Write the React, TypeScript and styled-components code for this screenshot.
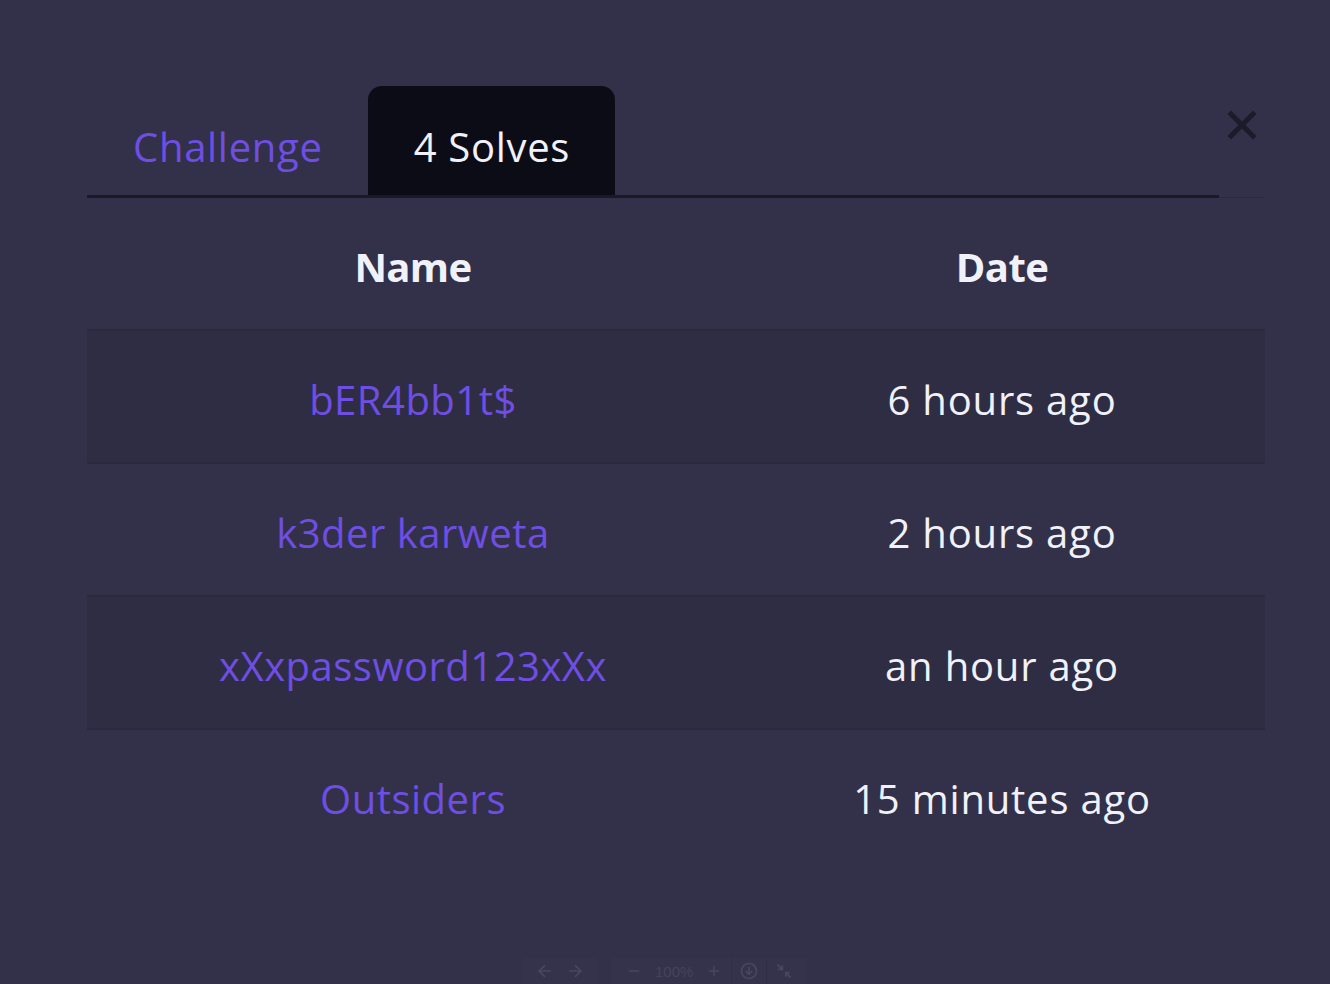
import styled, { createGlobalStyle } from "styled-components";

const GlobalStyle = createGlobalStyle`
  html, body {
    margin: 0;
    padding: 0;
    background: #323149;
  }
  body {
    font-family: "Open Sans", "Noto Sans", sans-serif;
    -webkit-font-smoothing: antialiased;
  }
`;

interface Solve {
  name: string;
  date: string;
}

const solves: Solve[] = [
  { name: "bER4bb1t$", date: "6 hours ago" },
  { name: "k3der karweta", date: "2 hours ago" },
  { name: "xXxpassword123xXx", date: "an hour ago" },
  { name: "Outsiders", date: "15 minutes ago" },
];

function App() {
  return (
    <Page>
      <GlobalStyle />
      <Modal>
        <Header>
          <Tabs>
            <Tab>Challenge</Tab>
            <Tab active>4 Solves</Tab>
          </Tabs>
          <Close aria-label="close">
            <svg width="34" height="34" viewBox="0 0 34 34">
              <path
                d="M6 6 L28 28 M28 6 L6 28"
                stroke="#1c1b29"
                strokeWidth="5"
                strokeLinecap="square"
              />
            </svg>
          </Close>
        </Header>

        <Table>
          <thead>
            <tr>
              <Th>Name</Th>
              <Th>Date</Th>
            </tr>
          </thead>
          <tbody>
            {solves.map((s, i) => (
              <Row key={s.name} striped={i % 2 === 0}>
                <NameCell>{s.name}</NameCell>
                <DateCell>{s.date}</DateCell>
              </Row>
            ))}
          </tbody>
        </Table>
      </Modal>

      {/* faint image viewer toolbar */}
      <Toolbar>
        <ToolGroup>
          <ToolIcon>
            <svg width="20" height="20" viewBox="0 0 24 24" fill="none" stroke="currentColor" strokeWidth="2">
              <path d="M19 12H5M12 19l-7-7 7-7" />
            </svg>
          </ToolIcon>
          <ToolIcon>
            <svg width="20" height="20" viewBox="0 0 24 24" fill="none" stroke="currentColor" strokeWidth="2">
              <path d="M5 12h14M12 5l7 7-7 7" />
            </svg>
          </ToolIcon>
        </ToolGroup>
        <ToolGroup>
          <ToolIcon>
            <svg width="18" height="18" viewBox="0 0 24 24" fill="none" stroke="currentColor" strokeWidth="2">
              <path d="M5 12h14" />
            </svg>
          </ToolIcon>
          <Zoom>100%</Zoom>
          <ToolIcon>
            <svg width="18" height="18" viewBox="0 0 24 24" fill="none" stroke="currentColor" strokeWidth="2">
              <path d="M5 12h14M12 5v14" />
            </svg>
          </ToolIcon>
          <Divider />
          <ToolIcon>
            <svg width="20" height="20" viewBox="0 0 24 24" fill="none" stroke="currentColor" strokeWidth="2">
              <circle cx="12" cy="12" r="9" />
              <path d="M12 7v9M8 12l4 4 4-4" />
            </svg>
          </ToolIcon>
          <Divider />
          <ToolIcon>
            <svg width="20" height="20" viewBox="0 0 24 24" fill="none" stroke="currentColor" strokeWidth="2">
              <path d="M4 4l6 6M10 5v5H5M20 20l-6-6M14 19v-5h5" />
            </svg>
          </ToolIcon>
        </ToolGroup>
      </Toolbar>
    </Page>
  );
}

export default App;

const Page = styled.div`
  position: relative;
  width: 1330px;
  height: 984px;
  overflow: hidden;
  background: #323149;
`;

const Modal = styled.div`
  width: 1178px;
  padding: 86px 0 0 87px;
`;

const Header = styled.div`
  display: flex;
  align-items: flex-start;
  justify-content: space-between;
  position: relative;
  border-bottom: 1px solid #2a293d;
  padding-bottom: 1px;

  &::after {
    content: "";
    position: absolute;
    left: 0;
    bottom: -1px;
    width: 1132px;
    height: 3px;
    background: #1a1a27;
  }
`;

const Tabs = styled.div`
  display: flex;
  align-items: flex-end;
`;

const Tab = styled.div<{ active?: boolean }>`
  height: 110px;
  box-sizing: border-box;
  padding: 12px 45px 0 46px;
  display: flex;
  align-items: center;
  font-size: 40px;
  line-height: 1;
  letter-spacing: 0.7px;
  color: ${(p) => (p.active ? "#f1f1fa" : "#6f4ee4")};
  background: ${(p) => (p.active ? "#0c0c16" : "transparent")};
  border-radius: 14px 14px 0 0;
`;

const Close = styled.div`
  width: 40px;
  height: 40px;
  margin-top: 19px;
  margin-right: 3px;
  display: flex;
  align-items: center;
  justify-content: center;
`;

const Table = styled.table`
  width: 1178px;
  border-collapse: collapse;
  table-layout: fixed;
  margin-top: 1px;
`;

const Th = styled.th`
  height: 131px;
  width: 50%;
  box-sizing: border-box;
  padding: 4px 0 0;
  font-size: 40px;
  font-weight: 700;
  letter-spacing: -0.6px;
  color: #f1f1fa;
  text-align: center;
  &:first-child {
    width: 652px;
  }
`;

const Row = styled.tr<{ striped: boolean }>`
  height: 133px;
  background: ${(p) => (p.striped ? "#2e2d43" : "transparent")};
  border-top: 2px solid #2a293d;
`;

const NameCell = styled.td`
  text-align: center;
  padding-top: 6px;
  font-size: 40px;
  letter-spacing: 0.5px;
  color: #6f4ee4;
`;

const DateCell = styled.td`
  text-align: center;
  padding-top: 6px;
  font-size: 40px;
  letter-spacing: 0.8px;
  color: #f1f1fa;
`;

const Toolbar = styled.div`
  position: absolute;
  left: 522px;
  top: 958px;
  display: flex;
  gap: 13px;
`;

const ToolGroup = styled.div`
  display: flex;
  align-items: center;
  height: 34px;
  padding: 0 8px;
  background: #34334b;
  border-radius: 4px;
  color: #48475e;
`;

const ToolIcon = styled.div`
  width: 30px;
  display: flex;
  justify-content: center;
  padding-bottom: 8px;
`;

const Zoom = styled.div`
  font-family: "Liberation Sans", Arial, sans-serif;
  font-size: 15px;
  color: #44435a;
  padding: 0 6px 8px;
`;

const Divider = styled.div`
  width: 1px;
  height: 34px;
  background: #2f2e44;
  margin: 0 2px;
`;
